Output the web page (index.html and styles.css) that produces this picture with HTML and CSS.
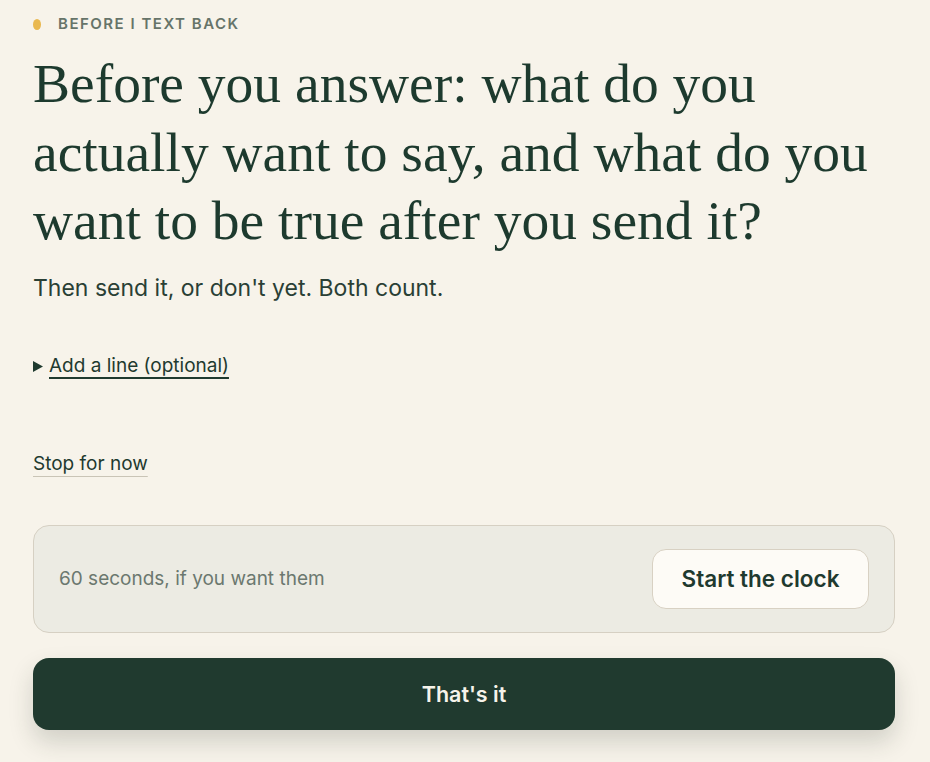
FILE: index.html
```html
<!DOCTYPE html>
<html lang="en">
<head>
<meta charset="utf-8">
<title>Before I text back</title>
<link rel="stylesheet" href="styles.css">
</head>
<body>
<main class="page">
  <div class="eyebrow"><span class="dot"></span><span class="eyebrow-text">BEFORE I TEXT BACK</span></div>
  <h1 class="title">Before you answer: what do you<br>actually want to say, and what do you<br>want to be true after you send it?</h1>
  <p class="sub">Then send it, or don't yet. Both count.</p>
  <div class="disclosure">
    <svg class="tri" width="10" height="11" viewBox="0 0 10 11"><path d="M0 0 L10 5.5 L0 11 Z" fill="#1f3a2f"/></svg>
    <span class="disclosure-label">Add a line (optional)</span>
  </div>
  <div class="stop"><span class="stop-label">Stop for now</span></div>
  <div class="timer">
    <span class="timer-text">60 seconds, if you want them</span>
    <button class="btn-clock">Start the clock</button>
  </div>
  <button class="btn-main">That's it</button>
</main>
</body>
</html>
```

FILE: styles.css
```css
html, body {
  margin: 0;
  padding: 0;
  background: #f7f3ea;
}
body {
  font-family: Inter, Roboto, "Noto Sans", "Liberation Sans", sans-serif;
  color: #1f3a2f;
}
.page {
  display: flex;
  flex-direction: column;
  align-items: stretch;
  padding: 14px 35px 40px 33px;
}
.eyebrow {
  display: flex;
  align-items: center;
  height: 20px;
  gap: 17px;
}
.dot {
  width: 8px;
  height: 11px;
  border-radius: 50%;
  background: #e9b84f;
  flex: none;
}
.eyebrow-text {
  font-size: 15px;
  font-weight: 600;
  letter-spacing: 1.5px;
  color: #667469;
  line-height: 20px;
}
.title {
  margin: 16px 0 0 0;
  font-family: "Liberation Serif", "Times New Roman", serif;
  font-weight: 400;
  font-size: 55.5px;
  line-height: 68.5px;
  color: #1d3a2e;
  white-space: nowrap;
}
.sub {
  margin: 17px 0 0 0;
  font-size: 23px;
  line-height: 30px;
  color: #2a3f35;
}
.disclosure {
  margin-top: 49px;
  display: flex;
  align-items: center;
  gap: 6px;
  font-size: 19px;
  line-height: 28px;
}
.tri {
  display: block;
  margin-top: 1px;
}
.disclosure-label {
  color: #1f3a2f;
  text-decoration: underline;
  text-decoration-thickness: 2px;
  text-underline-offset: 5px;
  text-decoration-color: #1f3a2f;
}
.stop {
  margin-top: 70px;
  font-size: 19px;
  line-height: 28px;
}
.stop-label {
  color: #1f3a2f;
  text-decoration: underline;
  text-decoration-thickness: 1px;
  text-underline-offset: 6px;
  text-decoration-color: #c9c4b6;
}
.timer {
  margin-top: 47px;
  display: flex;
  align-items: center;
  justify-content: space-between;
  background: #ecebe3;
  border: 1px solid #d6d0c3;
  border-radius: 16px;
  padding: 23px 25px 23px 25px;
}
.timer-text {
  font-size: 19px;
  color: #6b786f;
}
.btn-clock {
  font-family: Inter, Roboto, "Noto Sans", sans-serif;
  font-size: 22.5px;
  font-weight: 600;
  color: #1f3a2f;
  background: #fdfbf6;
  border: 1px solid #d8d1c3;
  border-radius: 14px;
  width: 217px;
  height: 60px;
  padding: 0;
}
.btn-main {
  margin-top: 25px;
  height: 72px;
  border: none;
  border-radius: 16px;
  background: #203a2f;
  color: #f6f3ea;
  font-family: Inter, Roboto, "Noto Sans", sans-serif;
  font-size: 21.5px;
  font-weight: 600;
  padding-top: 2px;
  box-shadow: 0 12px 24px rgba(40, 50, 40, 0.18);
}
```
